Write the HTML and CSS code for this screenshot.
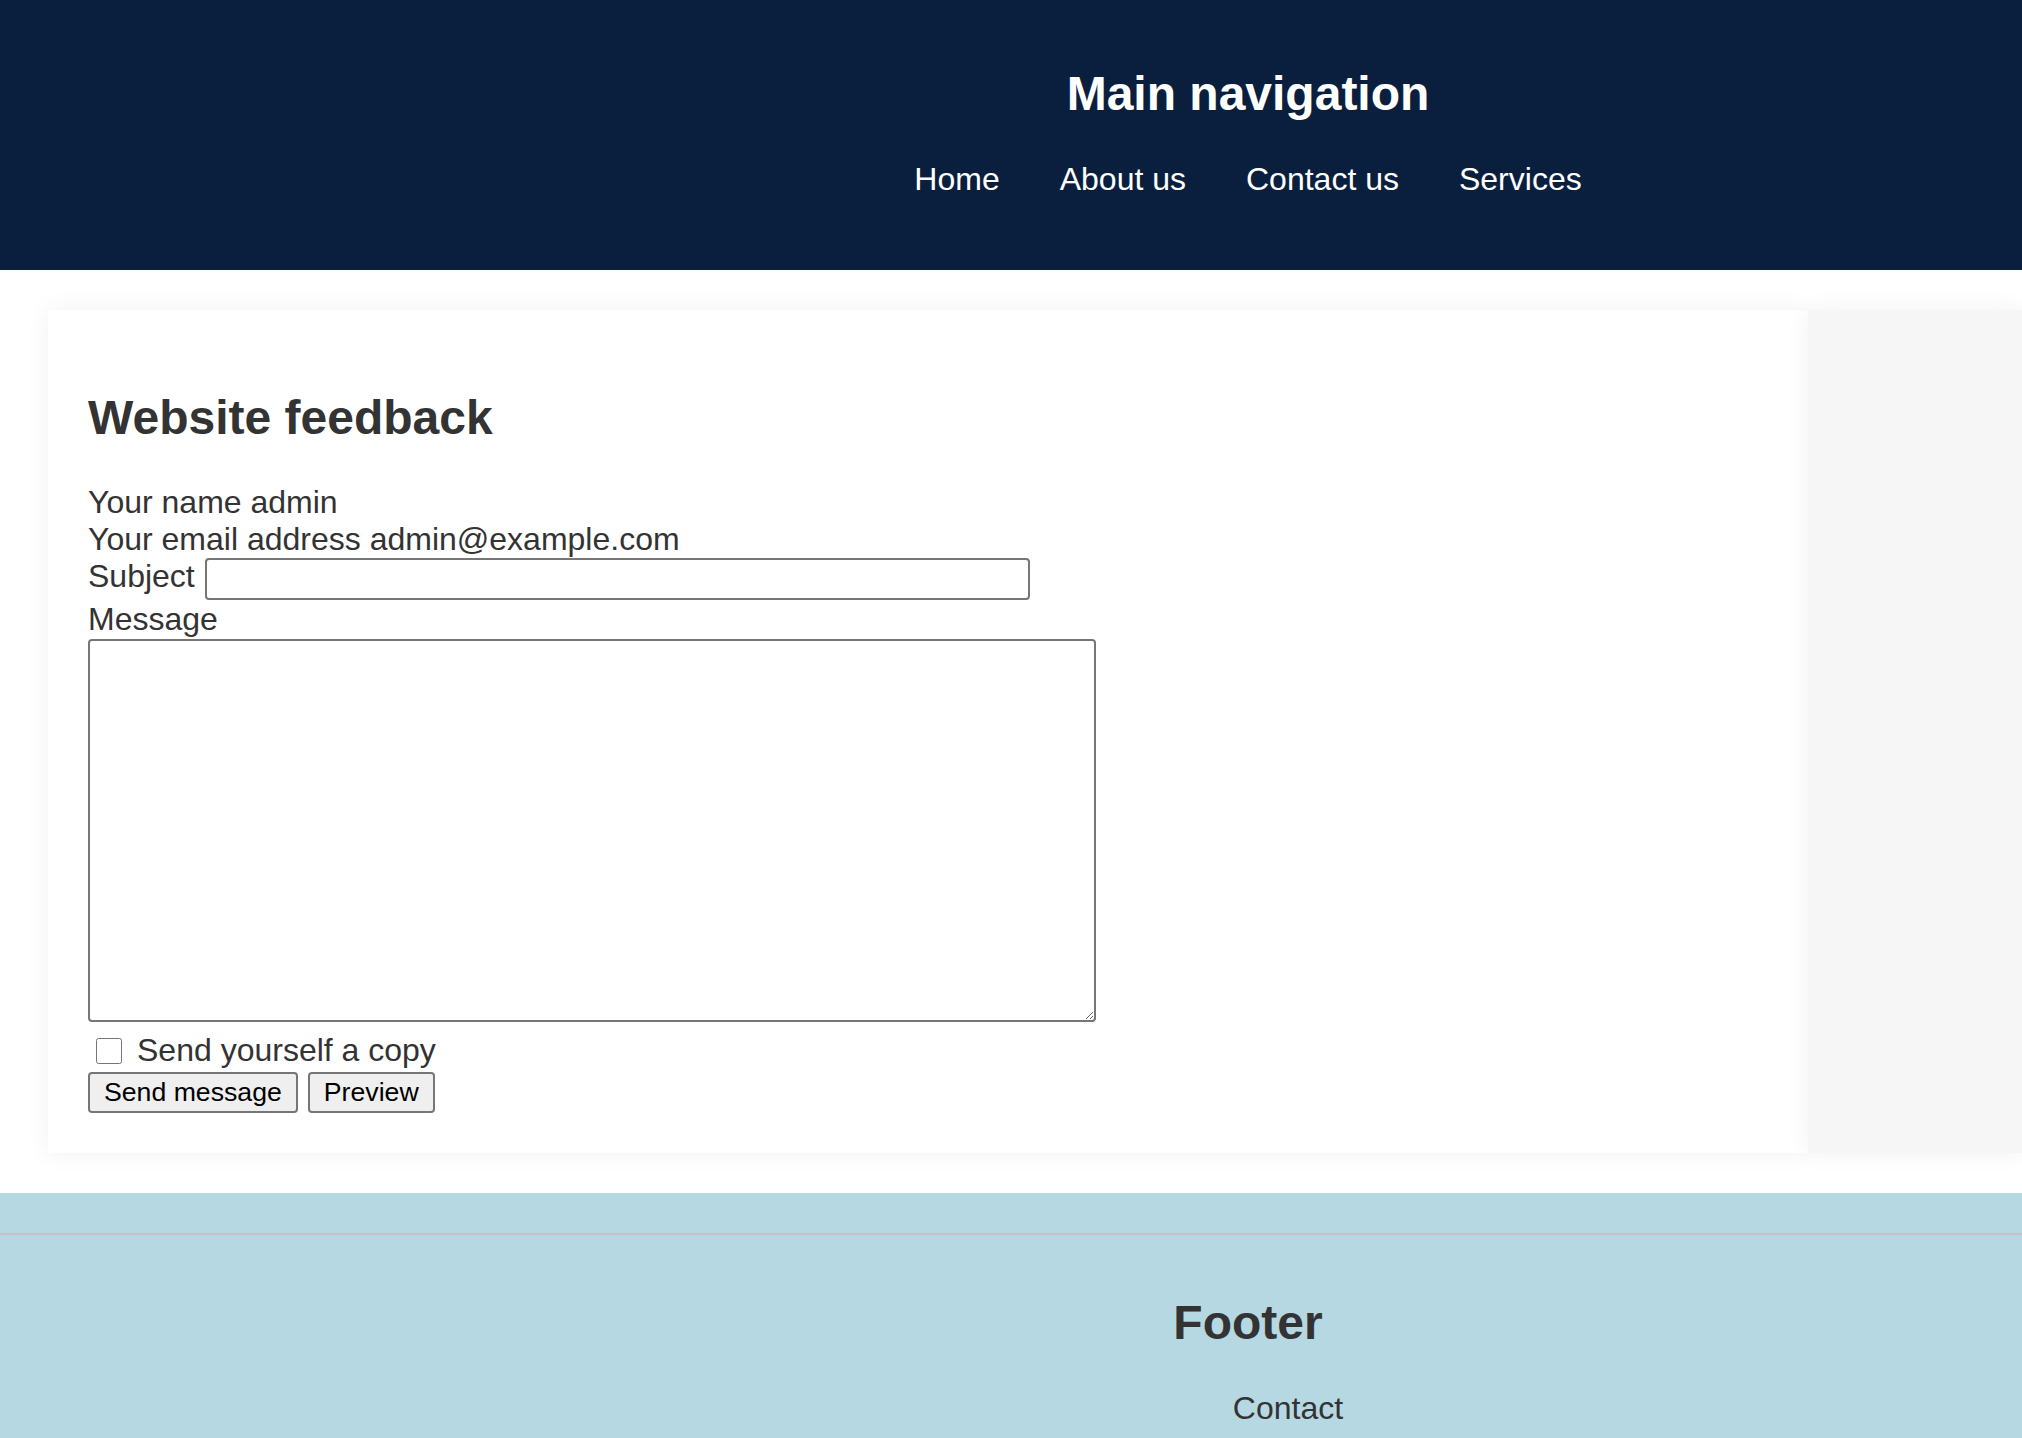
FILE: index.html
```html
<!DOCTYPE html>
<html lang="en">
<head>
<meta charset="utf-8">
<title>Website feedback</title>
<link rel="stylesheet" href="styles.css">
</head>
<body>
<header class="site-header">
  <div class="branding"></div>
  <nav class="main-nav">
    <h2 class="nav-title">Main navigation</h2>
    <ul class="nav-list">
      <li><a href="#">Home</a></li>
      <li><a href="#">About us</a></li>
      <li><a href="#">Contact us</a></li>
      <li><a href="#">Services</a></li>
    </ul>
  </nav>
</header>

<main class="layout">
  <section class="card">
    <h2 class="card-title">Website feedback</h2>
    <form class="contact-form">
      <div class="form-line">Your name admin</div>
      <div class="form-line">Your email address admin@example.com</div>
      <div class="form-row">
        <label for="subject">Subject</label>
        <input id="subject" class="text-input" type="text">
      </div>
      <label class="form-line msg-label" for="message">Message</label>
      <textarea id="message" class="text-area"></textarea>
      <div class="check-row">
        <input id="copy" class="check" type="checkbox">
        <label for="copy">Send yourself a copy</label>
      </div>
      <div class="actions">
        <button type="button" class="btn">Send message</button>
        <button type="button" class="btn">Preview</button>
      </div>
    </form>
  </section>
  <aside class="sidebar"></aside>
</main>

<footer class="site-footer">
  <div class="footer-inner">
    <div class="branding"></div>
    <div class="footer-block">
      <h2 class="footer-title">Footer</h2>
      <ul class="footer-list">
        <li>Contact</li>
      </ul>
    </div>
  </div>
</footer>
</body>
</html>
```

FILE: styles.css
```css
* {
  box-sizing: border-box;
}

html, body {
  margin: 0;
  padding: 0;
}

body {
  font-family: "Liberation Sans", Arial, sans-serif;
  font-size: 32px;
  line-height: normal;
  color: #333;
  background: #fff;
}

/* Header */
.site-header {
  display: flex;
  height: 270px;
  padding-top: 26px;
  background: #0a1f3e;
  color: #fff;
}

.branding {
  width: 474px;
  flex: none;
}

.main-nav {
  flex: 1;
  text-align: center;
}

.nav-title {
  margin: 40px 0 40px;
  font-size: 48px;
  font-weight: bold;
  color: #fff;
}

.nav-list {
  list-style: none;
  margin: 0;
  padding: 0;
  display: flex;
  justify-content: center;
}

.nav-list li {
  padding: 0 30px;
}

.nav-list a {
  color: #fff;
  text-decoration: none;
}

/* Main layout */
.layout {
  display: flex;
  margin: 40px 0;
  padding-left: 48px;
}

.card {
  width: 1760px;
  flex: none;
  padding: 40px;
  background: #fff;
  box-shadow: 0 0 24px rgba(0, 0, 0, 0.06);
}

.sidebar {
  flex: 1;
  background: #f6f6f6;
  box-shadow: 0 0 24px rgba(0, 0, 0, 0.06);
}

.card-title {
  margin: 40px 0 39px;
  font-size: 48px;
  font-weight: bold;
  color: #333;
}

.contact-form {
  margin: 0;
}

.form-line {
  display: block;
}

.form-row {
  display: flex;
  align-items: flex-start;
  gap: 10px;
  height: 42px;
  margin-top: 0;
}

.text-input {
  width: 825px;
  height: 42px;
  margin: 0;
  padding: 2px 4px;
  border: 2px solid #767676;
  border-radius: 4px;
  font-family: "Liberation Sans", Arial, sans-serif;
  font-size: 26.67px;
  background: #fff;
}

.msg-label {
  margin-top: 1px;
}

.text-area {
  display: block;
  width: 1008px;
  height: 383px;
  margin: 1px 0 10px;
  padding: 4px;
  border: 2px solid #767676;
  border-radius: 4px;
  font-family: "Liberation Mono", monospace;
  font-size: 26.67px;
  background: #fff;
  resize: both;
}

.check-row {
  display: flex;
  align-items: center;
  margin-top: 2px;
}

.check {
  width: 26px;
  height: 26px;
  margin: 0 9px 0 8px;
}

.check-row label {
  margin-left: 6px;
}

.actions {
  display: flex;
  gap: 10px;
  margin-top: 3px;
}

.btn {
  height: 41px;
  margin: 0;
  padding: 0 14px;
  border: 2px solid #767676;
  border-radius: 4px;
  background: #efefef;
  color: #000;
  font-family: "Liberation Sans", Arial, sans-serif;
  font-size: 26.67px;
}

/* Footer */
.site-footer {
  background: #b6d8e3;
  padding-top: 40px;
  padding-bottom: 40px;
}

.footer-inner {
  display: flex;
  border-top: 2px solid #c6c2c8;
  padding-top: 20px;
}

.footer-block {
  flex: 1;
  text-align: center;
}

.footer-title {
  margin: 40px 0;
  font-size: 48px;
  font-weight: bold;
  color: #333;
}

.footer-list {
  list-style: none;
  margin: 0;
  padding: 0 0 0 80px;
}
```
